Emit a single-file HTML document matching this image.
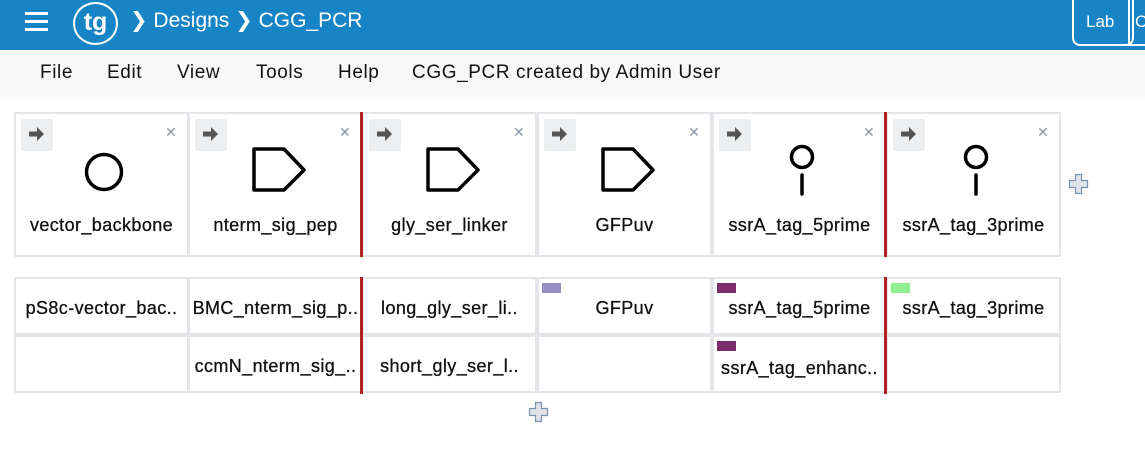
<!DOCTYPE html>
<html><head><meta charset="utf-8"><style>
*{margin:0;padding:0;box-sizing:border-box}
body{width:1145px;height:452px;overflow:hidden;background:#fff;font-family:"Liberation Sans","DejaVu Sans",sans-serif;position:relative;color:#111}
.a{position:absolute}
.hdr{left:0;top:0;width:1145px;height:50px;background:#1784c5}
.menu{left:0;top:50px;width:1145px;height:47px;background:#f8f8f8;font-size:19px;letter-spacing:0.6px}
.menu span{position:absolute;top:12px}
.card{position:absolute;top:112px;width:175px;height:145px;border:2px solid #e3e5e8;background:#fff}
.btn{position:absolute;left:5px;top:5px;width:32px;height:32px;background:#eceeef;border-radius:2px}
.x{position:absolute;left:149px;top:10px;color:#8a96a3;font-size:14px;font-weight:bold}
.lbl{position:absolute;left:0;width:100%;text-align:center;top:101px;font-size:18px;letter-spacing:0.4px;-webkit-text-stroke:0.3px #111}
.cell{position:absolute;width:175px;height:58px;border:2px solid #e3e5e8;background:#fff;font-size:18px;letter-spacing:0.4px;-webkit-text-stroke:0.3px #111;text-align:center;line-height:58px;white-space:nowrap}
.red{position:absolute;width:3px;background:#b22222}
.sw{position:absolute;width:19px;height:10px}
</style></head><body>
<div class="a hdr">
 <div class="a" style="left:25px;top:12px;width:23px;height:3px;background:#fff;box-shadow:0 8px 0 #fff,0 16px 0 #fff"></div>
 <div class="a" style="left:73px;top:2px;width:45px;height:43px;border:2px solid #fff;border-radius:50%;color:#fff;font-size:25px;font-weight:bold;text-align:center;line-height:37px">tg</div>
 <div class="a" style="left:130px;top:8px;color:#fff;font-size:21px">❯ Designs ❯ CGG_PCR</div>
 <div class="a" style="left:1072px;top:0;width:62px;height:46px;border:2px solid #fff;border-top:none;border-radius:0 0 8px 8px;color:#fff;font-size:17px;padding:12px 0 0 12px">Lab</div>
 <div class="a" style="left:1128px;top:0;width:20px;height:46px;border-left:2px solid #fff;border-bottom:2px solid #fff;color:#fff;font-size:17px;padding:12px 0 0 5px">C</div>
</div>
<div class="a menu">
 <span style="left:40px">File</span><span style="left:107px">Edit</span><span style="left:177px">View</span><span style="left:256px">Tools</span><span style="left:338px">Help</span><span style="left:412px">CGG_PCR created by Admin User</span>
</div>

<div class="card" style="left:14px"><div class="btn"></div><div class="x">✕</div>
 <svg class="a" style="left:0;top:0" width="175" height="100"><circle cx="88" cy="58" r="17.5" fill="none" stroke="#000" stroke-width="3.5"/></svg>
 <div class="lbl">vector_backbone</div></div>
<div class="card" style="left:188px"><div class="btn"></div><div class="x">✕</div>
 <svg class="a" style="left:0;top:0" width="175" height="100"><path d="M64 35H94L114 56L94 76H64Z" fill="none" stroke="#000" stroke-width="3.5" stroke-linejoin="round"/></svg>
 <div class="lbl">nterm_sig_pep</div></div>
<div class="card" style="left:362px"><div class="btn"></div><div class="x">✕</div>
 <svg class="a" style="left:0;top:0" width="175" height="100"><path d="M64 35H94L114 56L94 76H64Z" fill="none" stroke="#000" stroke-width="3.5" stroke-linejoin="round"/></svg>
 <div class="lbl">gly_ser_linker</div></div>
<div class="card" style="left:537px"><div class="btn"></div><div class="x">✕</div>
 <svg class="a" style="left:0;top:0" width="175" height="100"><path d="M64 35H94L114 56L94 76H64Z" fill="none" stroke="#000" stroke-width="3.5" stroke-linejoin="round"/></svg>
 <div class="lbl">GFPuv</div></div>
<div class="card" style="left:712px"><div class="btn"></div><div class="x">✕</div>
 <svg class="a" style="left:0;top:0" width="175" height="100"><circle cx="88" cy="43" r="10.5" fill="none" stroke="#000" stroke-width="3.5"/><line x1="88" y1="61" x2="88" y2="80" stroke="#000" stroke-width="3.5" stroke-linecap="round"/></svg>
 <div class="lbl">ssrA_tag_5prime</div></div>
<div class="card" style="left:886px"><div class="btn"></div><div class="x">✕</div>
 <svg class="a" style="left:0;top:0" width="175" height="100"><circle cx="88" cy="43" r="10.5" fill="none" stroke="#000" stroke-width="3.5"/><line x1="88" y1="61" x2="88" y2="80" stroke="#000" stroke-width="3.5" stroke-linecap="round"/></svg>
 <div class="lbl">ssrA_tag_3prime</div></div>
<svg class="a" style="left:0;top:0;pointer-events:none" width="1145" height="452">
 <g fill="#555">
  <path d="M29 131.5h8v-4.5l7 7l-7 7v-4.5h-8z"/>
  <path d="M203 131.5h8v-4.5l7 7l-7 7v-4.5h-8z"/>
  <path d="M377 131.5h8v-4.5l7 7l-7 7v-4.5h-8z"/>
  <path d="M552 131.5h8v-4.5l7 7l-7 7v-4.5h-8z"/>
  <path d="M727 131.5h8v-4.5l7 7l-7 7v-4.5h-8z"/>
  <path d="M901 131.5h8v-4.5l7 7l-7 7v-4.5h-8z"/>
 </g>
 <path d="M1075.5 174.5h6v6h6v7h-6v6h-6v-6h-6v-7h6z" fill="#dde3e9" stroke="#7b93ad" stroke-width="1.2"/>
 <path d="M535.5 402.5h6v6h6v7h-6v6h-6v-6h-6v-7h6z" fill="#dde3e9" stroke="#7b93ad" stroke-width="1.2"/>
</svg>

<div class="cell" style="left:14px;top:277px">pS8c-vector_bac..</div>
<div class="cell" style="left:188px;top:277px">BMC_nterm_sig_p..</div>
<div class="cell" style="left:362px;top:277px">long_gly_ser_li..</div>
<div class="cell" style="left:537px;top:277px">GFPuv</div>
<div class="cell" style="left:712px;top:277px">ssrA_tag_5prime</div>
<div class="cell" style="left:886px;top:277px">ssrA_tag_3prime</div>
<div class="cell" style="left:14px;top:335px"></div>
<div class="cell" style="left:188px;top:335px">ccmN_nterm_sig_..</div>
<div class="cell" style="left:362px;top:335px">short_gly_ser_l..</div>
<div class="cell" style="left:537px;top:335px"></div>
<div class="cell" style="left:712px;top:335px;line-height:62px">ssrA_tag_enhanc..</div>
<div class="cell" style="left:886px;top:335px"></div>
<div class="sw" style="left:542px;top:283px;background:#9790c6"></div>
<div class="sw" style="left:717px;top:283px;background:#7b2d6b"></div>
<div class="sw" style="left:891px;top:283px;background:#90f090"></div>
<div class="sw" style="left:717px;top:341px;background:#7b2d6b"></div>

<div class="red" style="left:360px;top:112px;height:145px"></div>
<div class="red" style="left:884px;top:112px;height:145px"></div>
<div class="red" style="left:360px;top:277px;height:117px"></div>
<div class="red" style="left:884px;top:277px;height:117px"></div>
</body></html>
